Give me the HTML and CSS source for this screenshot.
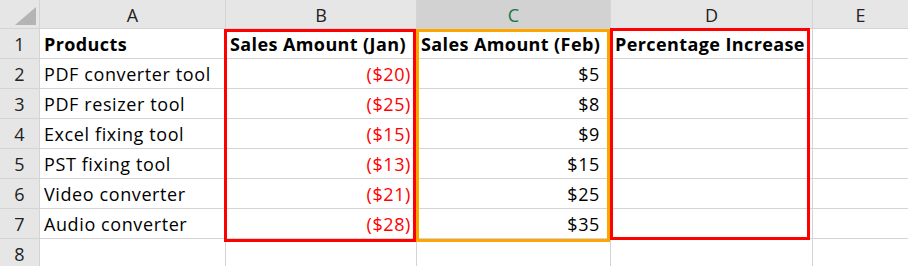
FILE: index.html
```html
<!DOCTYPE html>
<html lang="en">
<head>
    <meta charset="UTF-8">
    <meta name="viewport" content="width=device-width, initial-scale=1.0">
    <title>Sales Sheet</title>
    <link rel="stylesheet" href="styles.css">
</head>
<body>
    <div class="wrap">
        <div class="sheet">
            <div class="corner"><span class="tri"></span></div>
            <div class="col-hd">A</div>
            <div class="col-hd">B</div>
            <div class="col-hd selected">C</div>
            <div class="col-hd">D</div>
            <div class="col-hd">E</div>

            <div class="row-hd">1</div>
            <div class="cell bold">Products</div>
            <div class="cell bold">Sales Amount (Jan)</div>
            <div class="cell bold">Sales Amount (Feb)</div>
            <div class="cell bold">Percentage Increase</div>
            <div class="cell"></div>

            <div class="row-hd">2</div>
            <div class="cell">PDF converter tool</div>
            <div class="cell neg">($20)</div>
            <div class="cell pos">$5</div>
            <div class="cell"></div>
            <div class="cell"></div>

            <div class="row-hd">3</div>
            <div class="cell">PDF resizer tool</div>
            <div class="cell neg">($25)</div>
            <div class="cell pos">$8</div>
            <div class="cell"></div>
            <div class="cell"></div>

            <div class="row-hd">4</div>
            <div class="cell">Excel fixing tool</div>
            <div class="cell neg">($15)</div>
            <div class="cell pos">$9</div>
            <div class="cell"></div>
            <div class="cell"></div>

            <div class="row-hd">5</div>
            <div class="cell">PST fixing tool</div>
            <div class="cell neg">($13)</div>
            <div class="cell pos">$15</div>
            <div class="cell"></div>
            <div class="cell"></div>

            <div class="row-hd">6</div>
            <div class="cell">Video converter</div>
            <div class="cell neg">($21)</div>
            <div class="cell pos">$25</div>
            <div class="cell"></div>
            <div class="cell"></div>

            <div class="row-hd">7</div>
            <div class="cell">Audio converter</div>
            <div class="cell neg">($28)</div>
            <div class="cell pos">$35</div>
            <div class="cell"></div>
            <div class="cell"></div>

            <div class="row-hd">8</div>
            <div class="cell"></div>
            <div class="cell"></div>
            <div class="cell"></div>
            <div class="cell"></div>
            <div class="cell"></div>
        </div>

        <!-- highlight boxes drawn over the grid -->
        <div class="box box-jan"></div>
        <div class="box box-feb"></div>
        <div class="box box-pct"></div>
    </div>
</body>
</html>
```

FILE: styles.css
```css
:root {
    --grid-line: #d4d4d4;
    --header-bg: #e6e6e6;
    --header-sel: #d2d2d2;
    --red: #ff0000;
    --orange: #ffa500;
}

body {
    margin: 0;
    font-family: 'Open Sans', Lato, sans-serif;
    color: #000;
    background: #fff;
}

.wrap {
    position: relative;
    width: 908px;
    height: 266px;
    overflow: hidden;
}

.sheet {
    display: grid;
    grid-template-columns: 39px 185px 190px 193px 201px 1fr;
    grid-template-rows: 28px repeat(8, 29px);
    gap: 1px;
    background: var(--grid-line);
    font-size: 18px;
}

.corner {
    background: var(--header-bg);
    position: relative;
}

.tri {
    position: absolute;
    right: 3px;
    bottom: 3px;
    width: 0;
    height: 0;
    border-left: 21px solid transparent;
    border-bottom: 18px solid #b4b4b4;
}

.col-hd {
    background: var(--header-bg);
    display: flex;
    align-items: center;
    justify-content: center;
    color: #222;
    padding-top: 2px;
}

.col-hd.selected {
    background: var(--header-sel);
    color: #217346;
}

.row-hd {
    background: var(--header-bg);
    display: flex;
    align-items: center;
    justify-content: center;
    color: #222;
}

.cell {
    background: #fff;
    display: flex;
    align-items: center;
    padding: 0 4px;
    white-space: nowrap;
    overflow: hidden;
    letter-spacing: 0.6px;
}

.bold {
    font-weight: bold;
    letter-spacing: 0.4px;
}

.neg {
    justify-content: flex-end;
    color: var(--red);
    padding-right: 5px;
}

.pos {
    justify-content: flex-end;
    padding-right: 10px;
}

.box {
    position: absolute;
    box-sizing: border-box;
    border: 3px solid var(--red);
}

.box-jan {
    left: 224px;
    top: 29px;
    width: 192px;
    height: 213px;
}

.box-feb {
    left: 416px;
    top: 29px;
    width: 194px;
    height: 213px;
    border-color: var(--orange);
}

.box-pct {
    left: 610px;
    top: 28px;
    width: 200px;
    height: 212px;
}
```
